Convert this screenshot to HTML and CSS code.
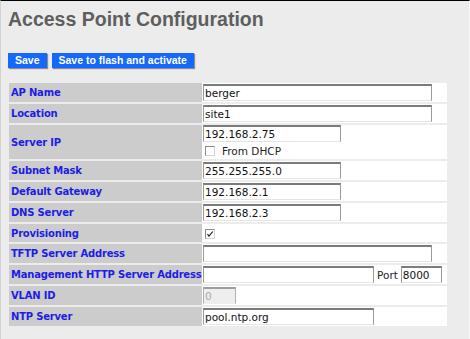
FILE: index.html
```html
<!DOCTYPE html>
<html lang="en">
<head>
  <meta charset="UTF-8" />
  <title>Access Point Configuration</title>
  <link rel="stylesheet" href="styles.css">
</head>
<body>
  <h1 class="title">Access Point Configuration</h1>

  <div class="actions">
    <button class="btn">Save</button>
    <button class="btn">Save to flash and activate</button>
  </div>

  <table class="config">
    <tr>
      <th>AP Name</th>
      <td><input class="field wide" type="text" value="berger"></td>
    </tr>
    <tr>
      <th>Location</th>
      <td><input class="field wide" type="text" value="site1"></td>
    </tr>
    <tr>
      <th>Server IP</th>
      <td class="stack">
        <input class="field short" type="text" value="192.168.2.75">
        <label class="check-line">
          <span class="box"></span>
          From DHCP
        </label>
      </td>
    </tr>
    <tr>
      <th>Subnet Mask</th>
      <td><input class="field short" type="text" value="255.255.255.0"></td>
    </tr>
    <tr>
      <th>Default Gateway</th>
      <td><input class="field short" type="text" value="192.168.2.1"></td>
    </tr>
    <tr>
      <th>DNS Server</th>
      <td><input class="field short" type="text" value="192.168.2.3"></td>
    </tr>
    <tr class="slim">
      <th>Provisioning</th>
      <td>
        <span class="box">
          <svg width="8" height="8" viewBox="0 0 8 8"><polyline points="1.5,4 3,6.2 6.8,1.5" fill="none" stroke="#111" stroke-width="1.1"/></svg>
        </span>
      </td>
    </tr>
    <tr>
      <th>TFTP Server Address</th>
      <td><input class="field wide" type="text" value=""></td>
    </tr>
    <tr>
      <th>Management HTTP Server Address</th>
      <td>
        <div class="inline">
          <input class="field mid" type="text" value="">
          <span class="port-label">Port</span>
          <input class="field port" type="text" value="8000">
        </div>
      </td>
    </tr>
    <tr>
      <th>VLAN ID</th>
      <td><input class="field tiny" type="text" value="0" disabled></td>
    </tr>
    <tr>
      <th>NTP Server</th>
      <td><input class="field mid" type="text" value="pool.ntp.org"></td>
    </tr>
  </table>
</body>
</html>
```

FILE: styles.css
```css
body {
  margin: 0;
  width: 470px;
  height: 339px;
  box-sizing: border-box;
  overflow: hidden;
  background: #ececec;
  border-top: 1px solid #000;
  border-left: 1px solid #d3d3d3;
  border-right: 1px solid #f7f7f7;
  padding-left: 7px;
}

.title {
  margin: 7px 0 0;
  font: bold 19.5px/22px "Liberation Sans", Arial, sans-serif;
  color: #5e5e5e;
}

.actions {
  display: flex;
  gap: 5px;
  margin-top: 23px;
  height: 15px;
}

.btn {
  height: 15px;
  padding: 0 7px;
  border: none;
  background: #1468fb;
  color: #fff;
  font: bold 10.5px/15px "Liberation Sans", Arial, sans-serif;
  box-shadow: 1px 1px 1px #8c8c8c;
}

.config {
  margin: 13px 0 0 1px;
  border-collapse: separate;
  border-spacing: 0 2px;
  width: 438px;
}

.config th {
  width: 191px;
  height: 19px;
  padding: 0 0 0 2px;
  background: #cccccc;
  color: #1c1ce8;
  font: bold 10px "DejaVu Sans", Verdana, sans-serif;
  letter-spacing: -0.2px;
  text-align: left;
  white-space: nowrap;
}

.config td {
  height: 19px;
  padding: 0 0 0 1px;
  background: #fff;
  font: 10.5px "DejaVu Sans", Verdana, sans-serif;
  color: #222;
}

.config .slim th,
.config .slim td {
  height: 18px;
}

.field {
  display: block;
  box-sizing: border-box;
  height: 17px;
  margin: 0;
  padding: 0 1px;
  border-style: solid;
  border-width: 2px 1px 1px;
  border-color: #7b7b7b #9a9a9a #e4e4e4 #9a9a9a;
  background: #fff;
  font: 10.5px "DejaVu Sans", Verdana, sans-serif;
  color: #111;
  outline: none;
}

.field.wide { width: 229px; }
.field.short { width: 138px; }
.field.mid { width: 171px; }
.field.port { width: 41px; }
.field.tiny { width: 33px; }

.field:disabled {
  background: #eeeeee;
  color: #a8a8a8;
  border-color: #9c9c9c #b0b0b0 #eeeeee #b0b0b0;
}

.stack {
  padding-top: 1px;
}

.check-line {
  display: flex;
  align-items: center;
  gap: 7px;
  height: 17px;
  padding-left: 2px;
  font-size: 10.5px;
  color: #222;
}

.box {
  display: inline-flex;
  align-items: center;
  justify-content: center;
  box-sizing: border-box;
  width: 10px;
  height: 10px;
  border: 1px solid;
  border-color: #8a8a8a #d4d4d4 #d4d4d4 #8a8a8a;
  background: #fff;
  vertical-align: middle;
}

.slim .box {
  margin-left: 2px;
}

.inline {
  display: flex;
  align-items: center;
}

.port-label {
  margin: 0 3px 0 3px;
  font-size: 10.5px;
  color: #222;
}
```
